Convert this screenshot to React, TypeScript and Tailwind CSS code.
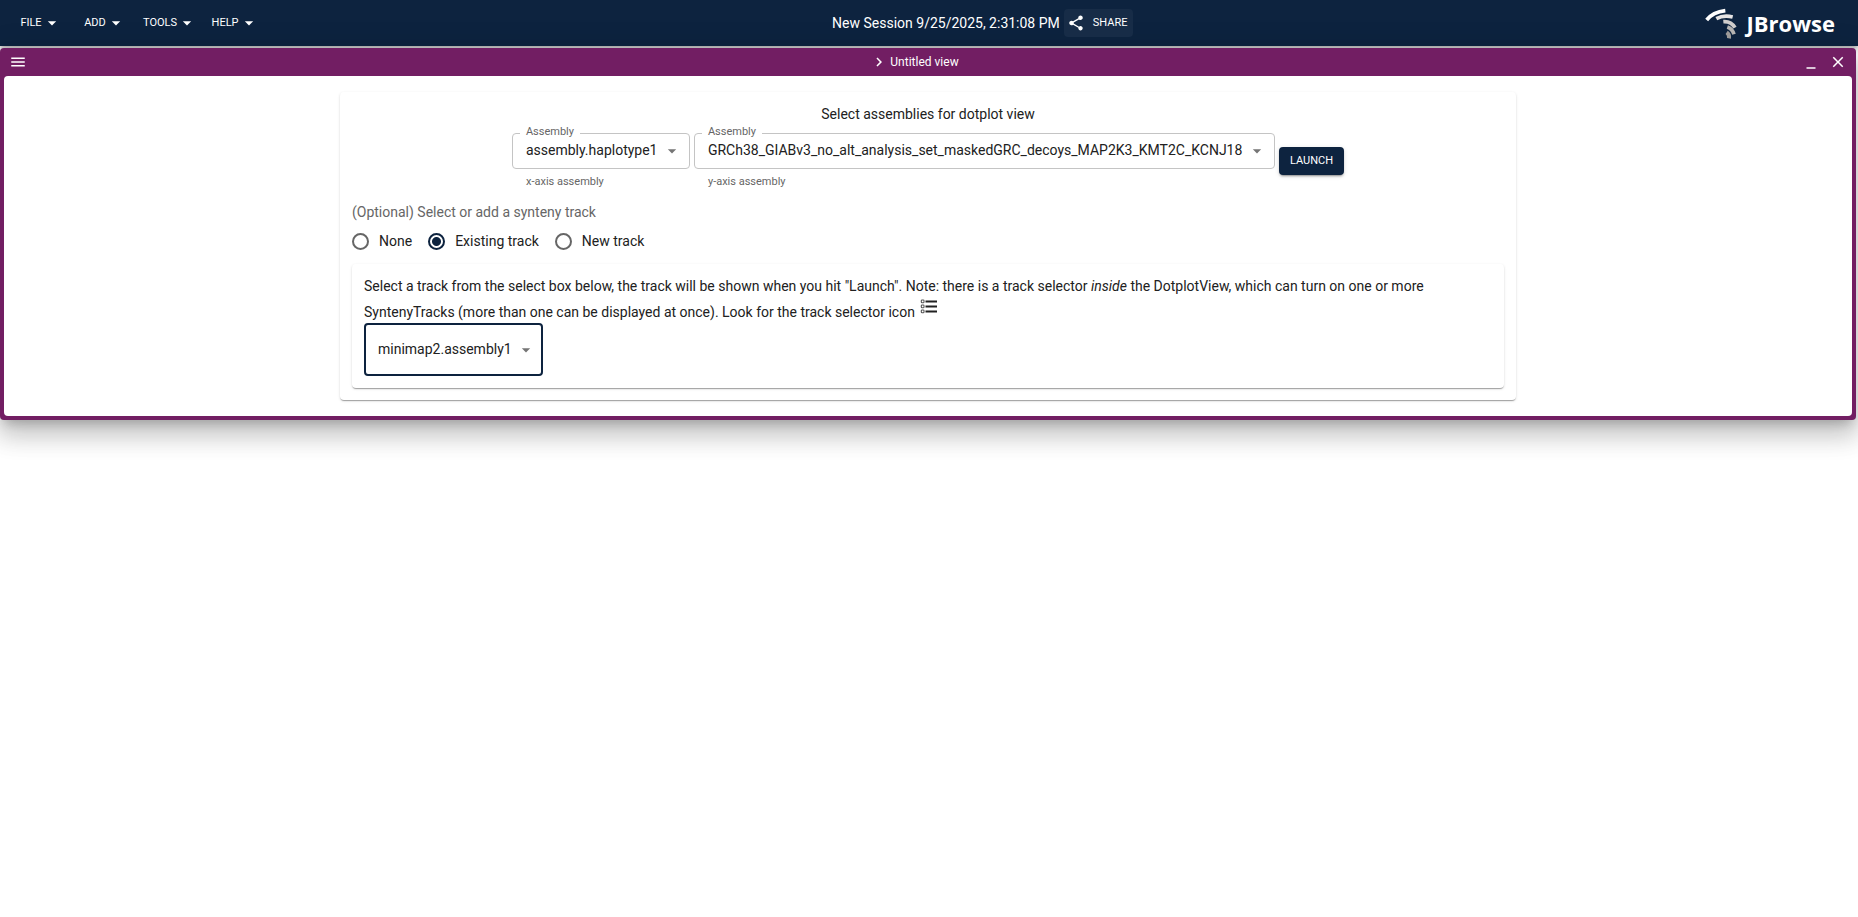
import React from 'react'

function Arrow({ className }: { className: string }) {
  return (
    <svg viewBox="0 0 24 24" className={className} fill="currentColor" aria-hidden="true">
      <path d="M7 10l5 5 5-5z" />
    </svg>
  )
}

function Glyph({ path }: { path: string }) {
  return (
    <svg viewBox="0 0 24 24" className="size-[18px]" fill="currentColor" aria-hidden="true">
      <path d={path} />
    </svg>
  )
}

const SHARE =
  'M18 16.08c-.76 0-1.44.3-1.96.77L8.91 12.7c.05-.23.09-.46.09-.7s-.04-.47-.09-.7l7.05-4.11c.54.5 1.25.81 2.04.81 1.66 0 3-1.34 3-3s-1.34-3-3-3-3 1.34-3 3c0 .24.04.47.09.7L8.04 9.81C7.5 9.31 6.79 9 6 9c-1.66 0-3 1.34-3 3s1.34 3 3 3c.79 0 1.5-.31 2.04-.81l7.12 4.16c-.05.21-.08.43-.08.65 0 1.61 1.31 2.92 2.92 2.92s2.92-1.31 2.92-2.92-1.31-2.92-2.92-2.92'
const MENU = 'M3 18h18v-2H3zm0-5h18v-2H3zm0-7v2h18V6z'
const CHEVRON_RIGHT = 'M10 6 8.59 7.41 13.17 12l-4.58 4.59L10 18l6-6z'
const MINIMIZE = 'M6 19h12v2H6z'
const CLOSE =
  'M19 6.41 17.59 5 12 10.59 6.41 5 5 6.41 10.59 12 5 17.59 6.41 19 12 13.41 17.59 19 19 17.59 13.41 12z'

function MenuButton({ label }: { label: string }) {
  return (
    <button
      type="button"
      className="flex h-8 min-w-16 items-center justify-center rounded px-[6px] text-[11px] uppercase"
    >
      {label}
      <Arrow className="size-5" />
    </button>
  )
}

function AssemblySelect({ id, value, helper }: { id: string; value: string; helper: string }) {
  return (
    <div className="flex flex-col gap-1">
      <div className="relative">
        <select
          id={id}
          aria-describedby={`${id}-helper`}
          className="block h-9 appearance-none rounded border border-[#c4c4c4] bg-white pr-[31px] pb-0.5 pl-[13px] text-sm"
        >
          <option>{value}</option>
        </select>
        <label htmlFor={id} className="absolute -top-[7px] left-2 bg-white px-[6px] text-[11px] leading-3 text-[#666]">
          Assembly
        </label>
        <Arrow className="pointer-events-none absolute top-2 right-2 size-5 text-[#757575]" />
      </div>
      <p id={`${id}-helper`} className="px-[14px] text-[11px] leading-[18px] text-[#666]">
        {helper}
      </p>
    </div>
  )
}

function TrackRadio({ label, checked }: { label: string; checked?: boolean }) {
  return (
    <label className="flex items-center gap-[10px] text-sm">
      <input
        type="radio"
        name="track-source"
        defaultChecked={checked}
        className="size-[17px] appearance-none rounded-full border-2 border-[#666] checked:border-[#0D233F] checked:bg-[radial-gradient(circle,#0D233F_4px,transparent_5px)]"
      />
      {label}
    </label>
  )
}

function TrackSelectorIcon() {
  return (
    <svg viewBox="0 0 20 20" className="inline size-5 align-baseline" fill="none" aria-label="track selector">
      <path d="M7.5 4.5h11.5M7.5 9.5h11.5M7.5 14.5h11.5" stroke="#212121" strokeWidth="1.8" />
      <g stroke="#555" strokeWidth="1.1">
        <rect x="3.3" y="3" width="2.7" height="2.7" rx=".8" />
        <rect x="3.3" y="8" width="2.7" height="2.7" rx=".8" />
        <rect x="3.3" y="13" width="2.7" height="2.7" rx=".8" />
      </g>
    </svg>
  )
}

function Logo() {
  return (
    <div className="flex items-center gap-[10px] pl-[6px] text-white">
      <svg viewBox="14 14 96 96" className="size-8" fill="none" aria-hidden="true">
        <path d="M19 53Q38 29 75 25" stroke="#fff" strokeWidth="11" />
        <path d="M48 49Q70 37 97 44" stroke="#e6e4e4" strokeWidth="11" />
        <path d="M69 58Q92 56 104 76" stroke="#cfcdcc" strokeWidth="11" />
        <path d="M81 74Q96 79 101 96" stroke="#b5b3b1" strokeWidth="11" />
        <path d="M79 90Q88 96 86 108" stroke="#9c9a98" strokeWidth="12" />
      </svg>
      <span className="font-['Open_Sans',sans-serif] text-[22px] leading-8 font-bold">JBrowse</span>
    </div>
  )
}

export default function App() {
  return (
    <div className="min-h-screen bg-white font-['Roboto',sans-serif] text-sm text-[#212121]">
      <header className="flex h-[46px] items-center bg-[#0D233F] pr-[23px] pl-[9px] text-white shadow-[0px_2px_4px_-1px_rgba(0,0,0,0.2),0px_4px_5px_0px_rgba(0,0,0,0.14),0px_1px_10px_0px_rgba(0,0,0,0.12)]">
        <nav className="flex">
          <MenuButton label="File" />
          <MenuButton label="Add" />
          <MenuButton label="Tools" />
          <MenuButton label="Help" />
        </nav>
        <div className="flex grow items-center justify-center gap-1">
          <span>New Session 9/25/2025, 2:31:08 PM</span>
          <button
            type="button"
            className="flex h-7 items-center gap-2 rounded bg-[#172c47] pr-[6px] pl-[3px] text-[11px] uppercase"
          >
            <Glyph path={SHARE} />
            Share
          </button>
        </div>
        <Logo />
      </header>

      <main className="pt-[2px] pr-[2px]">
        <section className="rounded bg-[#721E63] px-1 pb-1 shadow-[0px_8px_10px_-5px_rgba(0,0,0,0.2),0px_16px_24px_2px_rgba(0,0,0,0.14),0px_6px_30px_5px_rgba(0,0,0,0.12)]">
          <div className="flex h-7 items-center justify-between px-[5px] text-white">
            <button type="button" aria-label="View menu">
              <Glyph path={MENU} />
            </button>
            <h1 className="flex items-center gap-0.5 text-xs">
              <Glyph path={CHEVRON_RIGHT} />
              Untitled view
            </h1>
            <div className="flex gap-[9px]">
              <button type="button" aria-label="Minimize view">
                <Glyph path={MINIMIZE} />
              </button>
              <button type="button" aria-label="Close view">
                <Glyph path={CLOSE} />
              </button>
            </div>
          </div>

          <div className="rounded bg-white px-3 py-4">
            <form className="mx-auto max-w-[1176px] rounded p-3 shadow-[0px_2px_1px_-1px_rgba(0,0,0,0.2),0px_1px_1px_0px_rgba(0,0,0,0.14),0px_1px_3px_0px_rgba(0,0,0,0.12)]">
              <h2 className="text-center leading-[21px]">Select assemblies for dotplot view</h2>
              <div className="flex items-start justify-center gap-1 pt-2">
                <AssemblySelect id="x-assembly" value="assembly.haplotype1" helper="x-axis assembly" />
                <AssemblySelect
                  id="y-assembly"
                  value="GRCh38_GIABv3_no_alt_analysis_set_maskedGRC_decoys_MAP2K3_KMT2C_KCNJ18"
                  helper="y-axis assembly"
                />
                <button
                  type="button"
                  className="mt-[14px] h-7 min-w-16 rounded bg-[#0D233F] px-[11px] text-[11px] text-white uppercase shadow-[0px_3px_1px_-2px_rgba(0,0,0,0.2),0px_2px_2px_0px_rgba(0,0,0,0.14),0px_1px_5px_0px_rgba(0,0,0,0.12)]"
                >
                  Launch
                </button>
              </div>
              <fieldset className="mt-[11px]">
                <legend className="leading-[21px] text-[#666]">(Optional) Select or add a synteny track</legend>
                <div className="flex gap-4 pt-2">
                  <TrackRadio label="None" />
                  <TrackRadio label="Existing track" checked />
                  <TrackRadio label="New track" />
                </div>
              </fieldset>
              <div className="mt-[13px] rounded p-3 shadow-[0px_2px_1px_-1px_rgba(0,0,0,0.2),0px_1px_1px_0px_rgba(0,0,0,0.14),0px_1px_3px_0px_rgba(0,0,0,0.12)]">
                <p className="leading-[21px]">
                  Select a track from the select box below, the track will be shown when you hit "Launch". Note: there
                  is a track selector <i>inside</i> the DotplotView, which can turn on one or more SyntenyTracks (more
                  than one can be displayed at once). Look for the track selector icon <TrackSelectorIcon />
                </p>
                <div className="relative w-fit">
                  <select
                    aria-label="Synteny track"
                    className="block h-[53px] appearance-none rounded border-2 border-[#0D233F] bg-white pr-[29px] pb-0.5 pl-3 text-sm"
                  >
                    <option>minimap2.assembly1</option>
                  </select>
                  <Arrow className="pointer-events-none absolute top-[17px] right-[7px] size-5 text-[#757575]" />
                </div>
              </div>
            </form>
          </div>
        </section>
      </main>
    </div>
  )
}
